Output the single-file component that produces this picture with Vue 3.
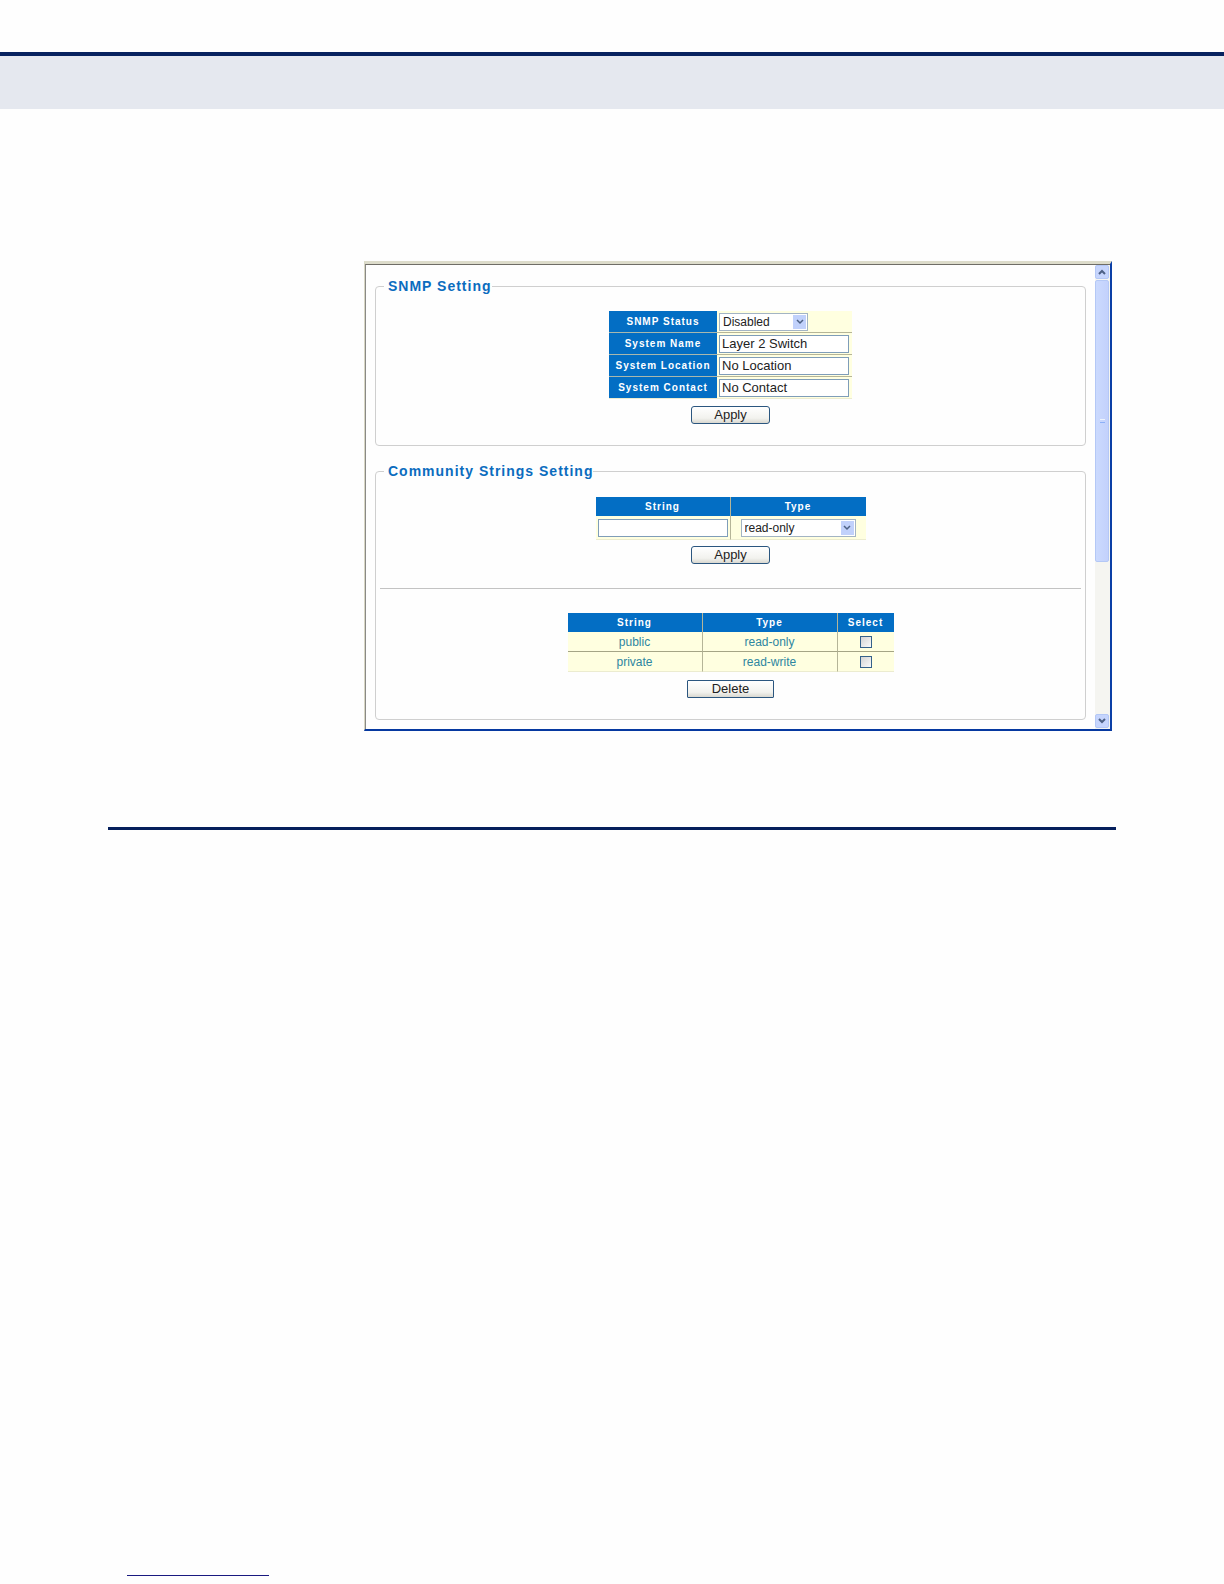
<template>
  <div class="page">
    <header class="page-header"></header>

    <main class="window">
      <div class="content">
        <fieldset class="group">
          <legend>SNMP Setting</legend>
          <form class="group-body" @submit.prevent>
            <table class="form-table">
              <tbody>
                <tr>
                  <th scope="row"><label for="status">SNMP Status</label></th>
                  <td>
                    <div class="select-box status-box">
                      <select id="status" v-model="status">
                        <option>Disabled</option>
                        <option>Enabled</option>
                      </select>
                      <span class="arrow">
                        <svg viewBox="0 0 8 6" width="8" height="6"><path d="M1 1l3 3 3-3" /></svg>
                      </span>
                    </div>
                  </td>
                </tr>
                <tr v-for="field in fields" :key="field.id">
                  <th scope="row"><label :for="field.id">{{ field.label }}</label></th>
                  <td><input :id="field.id" v-model="field.value" class="text-input" type="text" /></td>
                </tr>
              </tbody>
            </table>
            <button class="btn" type="submit">Apply</button>
          </form>
        </fieldset>

        <fieldset class="group">
          <legend>Community Strings Setting</legend>
          <form class="group-body community" @submit.prevent="addString">
            <table class="add-table">
              <thead>
                <tr>
                  <th><label for="string">String</label></th>
                  <th><label for="type">Type</label></th>
                </tr>
              </thead>
              <tbody>
                <tr>
                  <td><input id="string" v-model="newString" class="text-input" type="text" /></td>
                  <td>
                    <div class="select-box type-box">
                      <select id="type" v-model="newType">
                        <option>read-only</option>
                        <option>read-write</option>
                      </select>
                      <span class="arrow">
                        <svg viewBox="0 0 8 6" width="8" height="6"><path d="M1 1l3 3 3-3" /></svg>
                      </span>
                    </div>
                  </td>
                </tr>
              </tbody>
            </table>
            <button class="btn" type="submit">Apply</button>
          </form>
          <hr class="divider" />
          <div class="group-body strings">
            <table class="list-table">
              <thead>
                <tr>
                  <th>String</th>
                  <th>Type</th>
                  <th>Select</th>
                </tr>
              </thead>
              <tbody>
                <tr v-for="item in strings" :key="item.name">
                  <td>{{ item.name }}</td>
                  <td>{{ item.type }}</td>
                  <td><input v-model="item.selected" type="checkbox" :aria-label="item.name" /></td>
                </tr>
              </tbody>
            </table>
            <button class="btn btn-delete" type="button" @click="deleteSelected">Delete</button>
          </div>
        </fieldset>
      </div>

      <div class="scrollbar">
        <button class="scroll-btn" type="button" aria-label="Scroll up">
          <svg viewBox="0 0 8 6" width="8" height="6"><path d="M1 5l3-3 3 3" /></svg>
        </button>
        <div class="thumb"><span class="grip"></span></div>
        <div class="track"></div>
        <button class="scroll-btn" type="button" aria-label="Scroll down">
          <svg viewBox="0 0 8 6" width="8" height="6"><path d="M1 1l3 3 3-3" /></svg>
        </button>
      </div>
    </main>

    <div class="section-rule"></div>
    <footer class="page-footer"></footer>
  </div>
</template>

<script setup>
import { ref } from 'vue'

const status = ref('Disabled')
const fields = ref([
  { id: 'name', label: 'System Name', value: 'Layer 2 Switch' },
  { id: 'location', label: 'System Location', value: 'No Location' },
  { id: 'contact', label: 'System Contact', value: 'No Contact' }
])

const newString = ref('')
const newType = ref('read-only')
const strings = ref([
  { name: 'public', type: 'read-only', selected: false },
  { name: 'private', type: 'read-write', selected: false }
])

const addString = () => {
  if (!newString.value) return
  strings.value.push({ name: newString.value, type: newType.value, selected: false })
  newString.value = ''
}

const deleteSelected = () => {
  strings.value = strings.value.filter(item => !item.selected)
}
</script>

<style>
body {
  background: #fefefe;
}
</style>

<style scoped>
* {
  box-sizing: border-box;
}

.page {
  display: flex;
  flex-direction: column;
  min-height: 100vh;
  padding-top: 52px;
  font-family: 'Liberation Sans', Arial, sans-serif;
  font-size: 12px;
}

.page-header {
  height: 57px;
  border-top: 4px solid #07225f;
  background: #e5e8ef;
}

/* Browser window */
.window {
  display: flex;
  margin: 152px 112px 0 364px;
  border-top: 3px solid #dddccb;
  border-left: 1px solid #d8d6c4;
  border-right: 2px solid #0b3fa6;
  border-bottom: 2px solid #0638a0;
}

.content {
  flex: 1;
  display: flex;
  flex-direction: column;
  gap: 16px;
  padding: 12px 9px 9px;
  border-top: 1px solid #6f6d66;
  border-left: 1px solid #8a8a86;
}

.group {
  min-width: 0;
  margin: 0;
  padding: 0 4px 21px;
  border: 1px solid #cfcfcf;
  border-radius: 4px;
}

.group legend {
  margin-left: 4px;
  padding: 0 0 0 4px;
  color: #0b6cbe;
  font-size: 14px;
  font-weight: bold;
  line-height: 18px;
  letter-spacing: 1px;
}

.group-body {
  display: flex;
  flex-direction: column;
  align-items: center;
  gap: 7px;
  padding-top: 16px;
}

.group-body.community {
  gap: 6px;
  padding-top: 17px;
}

.group-body.strings {
  gap: 8px;
  padding-top: 0;
}

.divider {
  height: 1px;
  margin: 24px 0;
  border: 0;
  background: #c3c3c3;
}

/* Tables */
table {
  border-spacing: 0;
  background: #ffffe0;
}

th,
td {
  padding: 0;
}

th {
  background: #036ec4;
  color: #fff;
  font-size: 10px;
  font-weight: bold;
  line-height: 12px;
  letter-spacing: 1px;
  text-align: center;
}

.form-table th {
  width: 108px;
  height: 22px;
  border-bottom: 1px solid #a9b8ad;
}

.form-table td {
  width: 135px;
  padding: 0 2px;
  border-bottom: 1px solid #b5b598;
}

.form-table tr:last-child th,
.form-table tr:last-child td {
  border-bottom-color: #ececd0;
}

.add-table th,
.add-table td {
  width: 135px;
}

.add-table th {
  height: 19px;
}

.add-table td {
  height: 24px;
  border-bottom: 1px solid #ececd0;
}

.add-table th:first-child,
.add-table td:first-child {
  border-right: 1px solid #b5b598;
}

.add-table .text-input,
.add-table .select-box {
  margin: 0 auto;
}

.list-table th {
  height: 19px;
}

.list-table th,
.list-table td {
  width: 135px;
  border-right: 1px solid #b5b598;
}

.list-table td {
  height: 20px;
  border-bottom: 1px solid #a5a586;
  color: #2e86a0;
  line-height: 14px;
  text-align: center;
}

.list-table th:last-child,
.list-table td:last-child {
  width: 56px;
  border-right: 0;
}

.list-table tr:last-child td {
  border-bottom-color: #ececd0;
}

/* Controls */
.text-input {
  display: block;
  width: 130px;
  height: 18px;
  padding: 0 2px;
  border: 1px solid #7f9db9;
  background: #fff;
  color: #222;
  font-family: inherit;
  font-size: 13px;
}

.select-box {
  position: relative;
  height: 18px;
}

.status-box {
  width: 89px;
}

.type-box {
  width: 115px;
}

.select-box select {
  appearance: none;
  display: block;
  width: 100%;
  height: 100%;
  padding: 0 16px 0 3px;
  border: 1px solid #a3b4c4;
  border-radius: 0;
  background: #fff;
  color: #222;
  font-family: inherit;
  font-size: 12px;
}

.arrow {
  position: absolute;
  top: 2px;
  right: 2px;
  bottom: 2px;
  display: flex;
  align-items: center;
  justify-content: center;
  width: 13px;
  background: #c1d1fb;
  pointer-events: none;
}

svg {
  display: block;
}

path {
  fill: none;
  stroke: #4d6185;
  stroke-width: 2;
}

.arrow path {
  stroke-width: 1.5;
}

.btn {
  width: 79px;
  height: 18px;
  padding: 0;
  border: 1px solid #2b567f;
  border-radius: 3px;
  background: linear-gradient(#fff, #f2f2ee 70%, #d9d8d0);
  color: #222;
  font-family: inherit;
  font-size: 13px;
  line-height: 16px;
}

.btn-delete {
  width: 87px;
  border-radius: 1px;
}

input[type='checkbox'] {
  appearance: none;
  display: block;
  width: 12px;
  height: 12px;
  margin: 0 auto;
  border: 1px solid #35618a;
  background: linear-gradient(135deg, #d4d4d4, #fafafa);
}

input[type='checkbox']:checked {
  background: #21a121;
}

/* Scrollbar */
.scrollbar {
  display: flex;
  flex-direction: column;
  gap: 1px;
  width: 15px;
  padding: 0 1px 1px 0;
  border-top: 1px solid #6f6d66;
  background: #f5f5f1;
}

.scroll-btn {
  display: flex;
  align-items: center;
  justify-content: center;
  height: 14px;
  padding: 0;
  border: 1px solid #b4c8f6;
  border-radius: 2px;
  background: #c6d5fd;
}

.thumb {
  flex: 65;
  display: flex;
  align-items: center;
  justify-content: center;
  border: 1px solid #b4c8f6;
  border-radius: 2px;
  background: linear-gradient(90deg, #cbdafe, #c3d1fc);
}

.grip {
  width: 5px;
  height: 4px;
  border-top: 1px solid #eef4fe;
  border-bottom: 1px solid #8cb0f8;
}

.track {
  flex: 35;
}

/* Page rules */
.section-rule {
  height: 3px;
  margin: 96px 108px 0;
  background: #051f5c;
}

.page-footer {
  width: 142px;
  height: 1px;
  margin: auto 0 8px 127px;
  background: #1a1a80;
}
</style>
